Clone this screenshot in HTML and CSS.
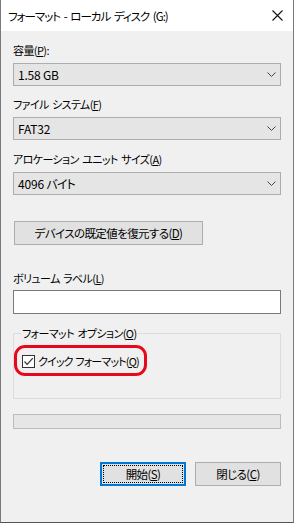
FILE: index.html
```html
<!DOCTYPE html>
<html lang="ja">
<head>
<meta charset="utf-8">
<link rel="stylesheet" href="styles.css">
</head>
<body>
<div class="window">
  <div class="titlebar">
    <span class="title">フォーマット - ローカル ディスク (G:)</span>
    <svg class="close" width="11" height="11" viewBox="0 0 11 11"><path d="M0.5 0.5 L10.5 10.5 M10.5 0.5 L0.5 10.5" stroke="#111" stroke-width="1.1" fill="none"/></svg>
  </div>
  <div class="content">
    <div class="field">
      <div class="label">容量(<u>P</u>):</div>
      <div class="combo"><span>1.58 GB</span><svg class="chev" width="9" height="5" viewBox="0 0 9 5"><path d="M0.5 0.5 L4.5 4.5 L8.5 0.5" stroke="#444" fill="none"/></svg></div>
    </div>
    <div class="field">
      <div class="label">ファイル システム(<u>F</u>)</div>
      <div class="combo"><span>FAT32</span><svg class="chev" width="9" height="5" viewBox="0 0 9 5"><path d="M0.5 0.5 L4.5 4.5 L8.5 0.5" stroke="#444" fill="none"/></svg></div>
    </div>
    <div class="field field-3">
      <div class="label">アロケーション ユニット サイズ(<u>A</u>)</div>
      <div class="combo"><span>4096 <span class="kana">バイト</span></span><svg class="chev" width="9" height="5" viewBox="0 0 9 5"><path d="M0.5 0.5 L4.5 4.5 L8.5 0.5" stroke="#444" fill="none"/></svg></div>
    </div>
    <div class="btn restore">デバイスの既定値を復元する(<u>D</u>)</div>
    <div class="label vol-label">ボリューム ラベル(<u>L</u>)</div>
    <div class="textbox"></div>
    <fieldset class="group">
      <legend>フォーマット オプション(<u>O</u>)</legend>
      <div class="check-row">
        <span class="checkbox"><svg width="11" height="11" viewBox="0 0 11 11"><path d="M1.5 5.5 L4.2 8.3 L9.8 2.2" stroke="#333" stroke-width="1.2" fill="none"/></svg></span>
        <span class="check-text">クイック フォーマット(<u>Q</u>)</span>
        <span class="highlight"></span>
      </div>
    </fieldset>
    <div class="progress"></div>
    <div class="actions">
      <div class="btn action primary"><span class="focus">開始(<u>S</u>)</span></div>
      <div class="btn action">閉じる(<u>C</u>)</div>
    </div>
  </div>
</div>
</body>
</html>
```

FILE: styles.css
```css
html, body {
  margin: 0;
  padding: 0;
  background: #6b6b5a;
}
* { box-sizing: border-box; }
.window {
  width: 294px;
  height: 523px;
  background: #f0f0f0;
  border-left: 1px solid #7a7a7a;
  border-right: 1px solid #7a7a7a;
  border-bottom: 1px solid #55564a;
  font-family: "Noto Sans CJK JP", "Noto Sans", sans-serif;
  font-size: 11px;
  font-feature-settings: "palt" 1;
  letter-spacing: -0.6px;
  word-spacing: 1.5px;
  color: #000;
  display: flex;
  flex-direction: column;
}
u { text-decoration: underline; text-underline-offset: 1px; }
.titlebar {
  height: 31px;
  background: #fff;
  display: flex;
  align-items: center;
  justify-content: space-between;
  padding-left: 7px;
  padding-right: 10px;
  flex: none;
}
.title { font-size: 11.5px; line-height: 16px; letter-spacing: -1px; word-spacing: 2px; }
.close { display: block; }
.content {
  padding: 11px 12px 0 12px;
  display: flex;
  flex-direction: column;
}
.field { display: flex; flex-direction: column; }
.field + .field { margin-top: 10px; }
.field-3 { margin-top: 11px !important; }
.label { line-height: 16px; height: 16px; white-space: nowrap; }
.combo {
  margin-top: 5px;
  height: 23px;
  background: #e5e5e5;
  border: 1px solid #adadad;
  display: flex;
  align-items: center;
  justify-content: space-between;
  padding: 0 4px 0 4px;
  line-height: 16px;
  font-size: 12px;
  letter-spacing: -0.2px;
  word-spacing: 0;
}
.combo .kana { letter-spacing: -0.8px; }
.chev { display: block; margin-right: 0; }
.btn {
  background: #e1e1e1;
  border: 1px solid #adadad;
  height: 24px;
  display: flex;
  align-items: center;
  justify-content: center;
  line-height: 16px;
  white-space: nowrap;
}
.restore {
  margin-top: 26px;
  margin-left: 1px;
  width: 189px;
  font-size: 11.5px;
}
.vol-label { margin-top: 25px; }
.textbox {
  margin-top: 4px;
  height: 24px;
  background: #fff;
  border: 1px solid #7a7a7a;
}
.group {
  margin: 11px 0 0 0;
  padding: 2px 8px 0 8px;
  border: 1px solid #dcdcdc;
  height: 74px;
  min-width: 0;
}
.group legend {
  padding: 0 1px;
  margin-left: -1px;
  line-height: 16px;
}
.check-row {
  position: relative;
  display: flex;
  align-items: center;
  gap: 3px;
  height: 20px;
  margin-top: 8px;
  line-height: 16px;
}
.check-text { letter-spacing: -0.85px; word-spacing: 1px; }
.checkbox {
  width: 13px;
  height: 13px;
  border: 1px solid #333;
  background: #fff;
  display: flex;
  align-items: center;
  justify-content: center;
}
.checkbox svg { display: block; }
.highlight {
  position: absolute;
  left: -8px;
  top: -6px;
  width: 133px;
  height: 31px;
  border: 3.5px solid #e8081c;
  border-radius: 11px;
}
.progress {
  margin-top: 15px;
  height: 15px;
  background: #e6e6e6;
  border: 1px solid #bcbcbc;
}
.actions {
  margin-top: 33px;
  display: flex;
  justify-content: flex-end;
  gap: 9px;
}
.action { width: 86px; font-size: 11.5px; }
.primary {
  border: 2px solid #0078d7;
  padding: 1px;
  align-items: stretch;
}
.primary .focus {
  flex: 1;
  border: 1px dotted #000;
  display: flex;
  align-items: center;
  justify-content: center;
}
```
